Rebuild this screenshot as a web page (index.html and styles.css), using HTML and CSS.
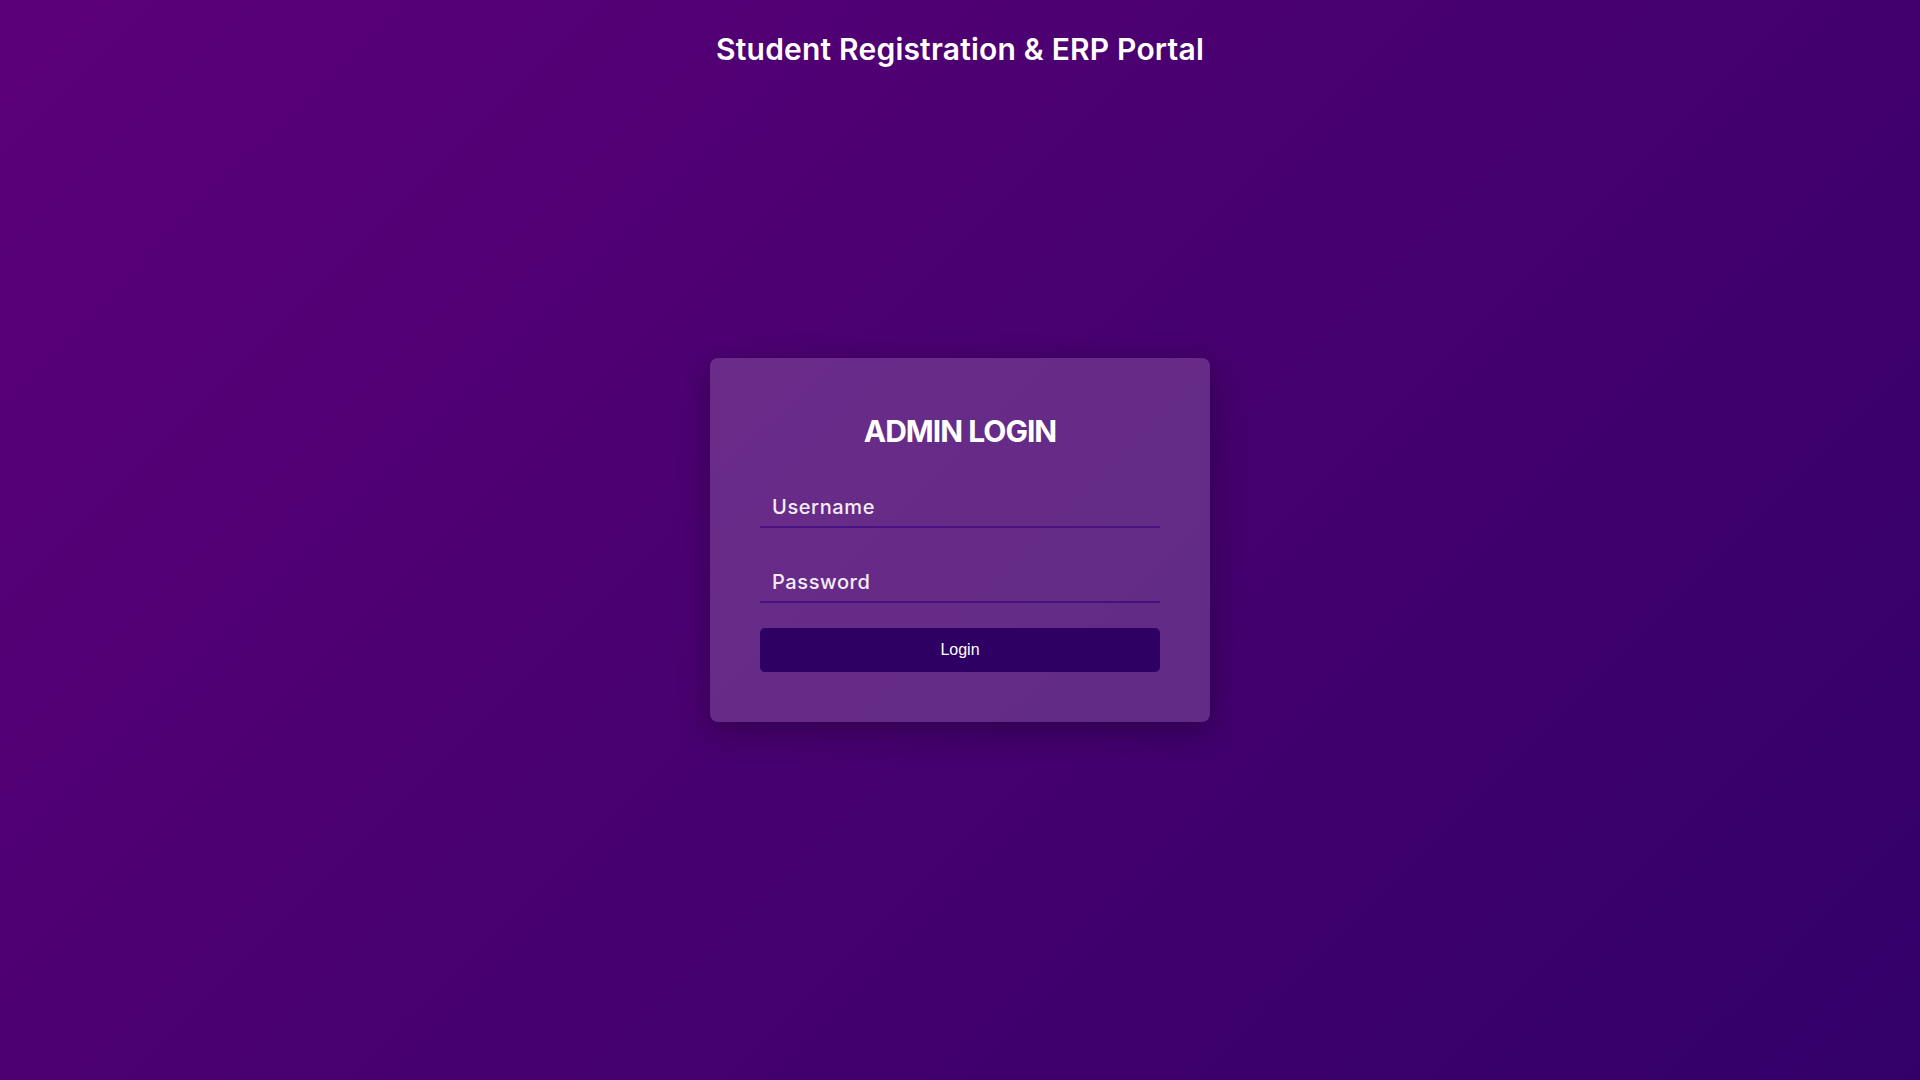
FILE: index.html
```html
<!DOCTYPE html>
<html lang="en">
<head>
<meta charset="utf-8">
<title>Student Registration &amp; ERP Portal</title>
<link rel="stylesheet" href="styles.css">
</head>
<body>
  <header class="site-header">
    <h1 class="site-title">Student Registration &amp; ERP Portal</h1>
  </header>
  <main class="main">
    <form class="login-card">
      <h2 class="login-title">ADMIN LOGIN</h2>
      <input class="field field-user" type="text" placeholder="Username">
      <input class="field field-pass" type="password" placeholder="Password">
      <button class="login-btn" type="button">Login</button>
    </form>
  </main>
</body>
</html>
```

FILE: styles.css
```css
html, body {
  margin: 0;
  padding: 0;
}

body {
  height: 100vh;
  display: grid;
  grid-template-rows: 100px 1fr 100px;
  background: linear-gradient(135deg, #5c007a 0%, #47006f 50%, #33006a 100%);
  font-family: "Inter", "Open Sans", sans-serif;
  color: #ffffff;
  overflow: hidden;
}

.site-header {
  padding-top: 31px;
  text-align: center;
}

.site-title {
  margin: 0;
  font-size: 30px;
  line-height: 1.2;
  font-weight: 600;
  letter-spacing: 0.2px;
}

.main {
  display: flex;
  align-items: center;
  justify-content: center;
}

.login-card {
  box-sizing: border-box;
  width: 500px;
  padding: 55px 50px 50px;
  display: flex;
  flex-direction: column;
  background: rgba(255, 255, 255, 0.17);
  border-radius: 8px;
  box-shadow: 0 8px 32px rgba(0, 0, 0, 0.3);
}

.login-title {
  margin: 0 0 33px;
  text-align: center;
  font-size: 30px;
  line-height: 1.2;
  font-weight: 700;
  letter-spacing: -1px;
}

.field {
  box-sizing: border-box;
  width: 100%;
  height: 46px;
  padding: 13px 10px 7px 12px;
  border: none;
  border-bottom: 2px solid #4b1182;
  background: transparent;
  font-family: "Inter", "Open Sans", sans-serif;
  font-size: 20px;
  font-weight: 500;
  letter-spacing: 0.6px;
  color: #ffffff;
  outline: none;
}

.field::placeholder {
  color: #f3ecf7;
  opacity: 1;
}

.field-pass {
  margin-top: 29px;
}

.login-btn {
  margin-top: 25px;
  height: 44px;
  border: none;
  border-radius: 5px;
  background: #2e0064;
  color: #ffffff;
  font-family: "Liberation Sans", Arial, sans-serif;
  font-size: 16px;
  cursor: pointer;
}
```
